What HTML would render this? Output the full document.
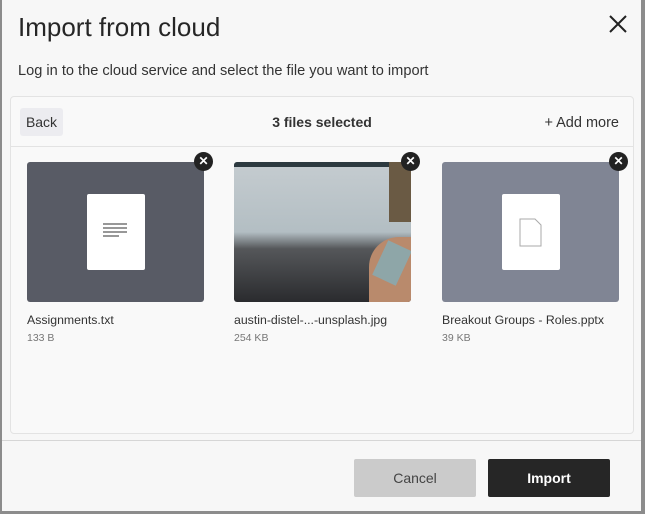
<!DOCTYPE html>
<html><head><style>
*{box-sizing:border-box;margin:0;padding:0}
body{width:645px;height:514px;background:#8c8c8c;font-family:"Liberation Sans",sans-serif;position:relative;overflow:hidden}
.dlg{position:absolute;left:2px;top:0;width:639px;height:511px;background:#f7f7f7}
.t{position:absolute;left:16px;top:12px;font-size:26px;color:#262626}
.x{position:absolute;left:606px;top:14px}
.sub{position:absolute;left:16px;top:63px;font-size:14.6px;color:#333}
.panel{position:absolute;left:8px;top:96px;width:624px;height:338px;background:#f9f9f9;border:1px solid #e3e3e3;border-radius:4px}
.hdr{position:absolute;left:0;top:0;width:100%;height:50px;border-bottom:1px solid #e3e3e3}
.back{position:absolute;left:9px;top:11px;width:43px;height:28px;background:#ececf0;border-radius:3px;font-size:14px;color:#333;line-height:28px;text-align:center}
.cnt{position:absolute;left:0;width:100%;top:17px;text-align:center;font-size:14px;font-weight:bold;color:#333}
.add{position:absolute;right:14px;top:18px;font-size:14.5px;color:#333}
.card{position:absolute;top:65px;width:177px}
.img{width:177px;height:140px;border-radius:3px;position:relative;overflow:hidden}
.doc{position:absolute;left:60px;top:32px;width:58px;height:76px;background:#fff;border-radius:2px}
.nm{font-size:12.3px;color:#333;margin-top:11px}
.sz{font-size:10.5px;color:#777;margin-top:5px}
.cl{position:absolute;top:-10px;right:-9px;width:19px;height:19px;border-radius:50%;background:#222;color:#fff;font-size:12px;line-height:19px;text-align:center;font-weight:bold}
.sep{position:absolute;left:0;top:440px;width:639px;border-top:1px solid #d6d6d6}
.btn{position:absolute;top:459px;width:122px;height:38px;font-size:14px;text-align:center;line-height:38px}
</style></head><body>
<div class="dlg">
<div class="t">Import from cloud</div>
<svg class="x" width="20" height="20" viewBox="0 0 20 20"><path d="M2 2L18 18M18 2L2 18" stroke="#222" stroke-width="2"/></svg>
<div class="sub">Log in to the cloud service and select the file you want to import</div>
<div class="panel">
<div class="hdr"><div class="back">Back</div><div class="cnt">3 files selected</div><div class="add">+ Add more</div></div>
<div class="card" style="left:16px"><div class="img" style="background:#585b65"><div class="doc"><svg width="58" height="76"><path d="M16 30h24M16 34h24M16 38h24M16 42h16" stroke="#777" stroke-width="1.5"/></svg></div></div><div class="nm">Assignments.txt</div><div class="sz">133 B</div><div class="cl">✕</div></div>
<div class="card" style="left:223px"><div class="img" style="background:linear-gradient(180deg,#c5ccd0 0%,#b3bec3 50%,#55575a 62%,#2a2b2e 100%)"><div style="position:absolute;left:0;top:0;width:100%;height:5px;background:#2d3a40"></div><div style="position:absolute;right:0;top:0;width:22px;height:60px;background:#6a5a44"></div><div style="position:absolute;left:135px;top:75px;width:42px;height:65px;background:#b98a6c;border-radius:30px 0 0 0"></div><div style="position:absolute;left:145px;top:82px;width:26px;height:38px;background:#8ea6a8;transform:rotate(25deg)"></div></div><div class="nm">austin-distel-...-unsplash.jpg</div><div class="sz">254 KB</div><div class="cl">✕</div></div>
<div class="card" style="left:431px"><div class="img" style="background:#808594"><div class="doc"><svg width="58" height="76"><path d="M18 25h15l6 6v21H18z" fill="none" stroke="#aaa" stroke-width="1"/></svg></div></div><div class="nm">Breakout Groups - Roles.pptx</div><div class="sz">39 KB</div><div class="cl">✕</div></div>
</div>
<div class="sep"></div>
<div class="btn" style="left:352px;background:#cbcbcb;color:#444;border-radius:2px">Cancel</div>
<div class="btn" style="left:486px;background:#262626;color:#fff;font-weight:bold;border-radius:2px">Import</div>
</div>
</body></html>
